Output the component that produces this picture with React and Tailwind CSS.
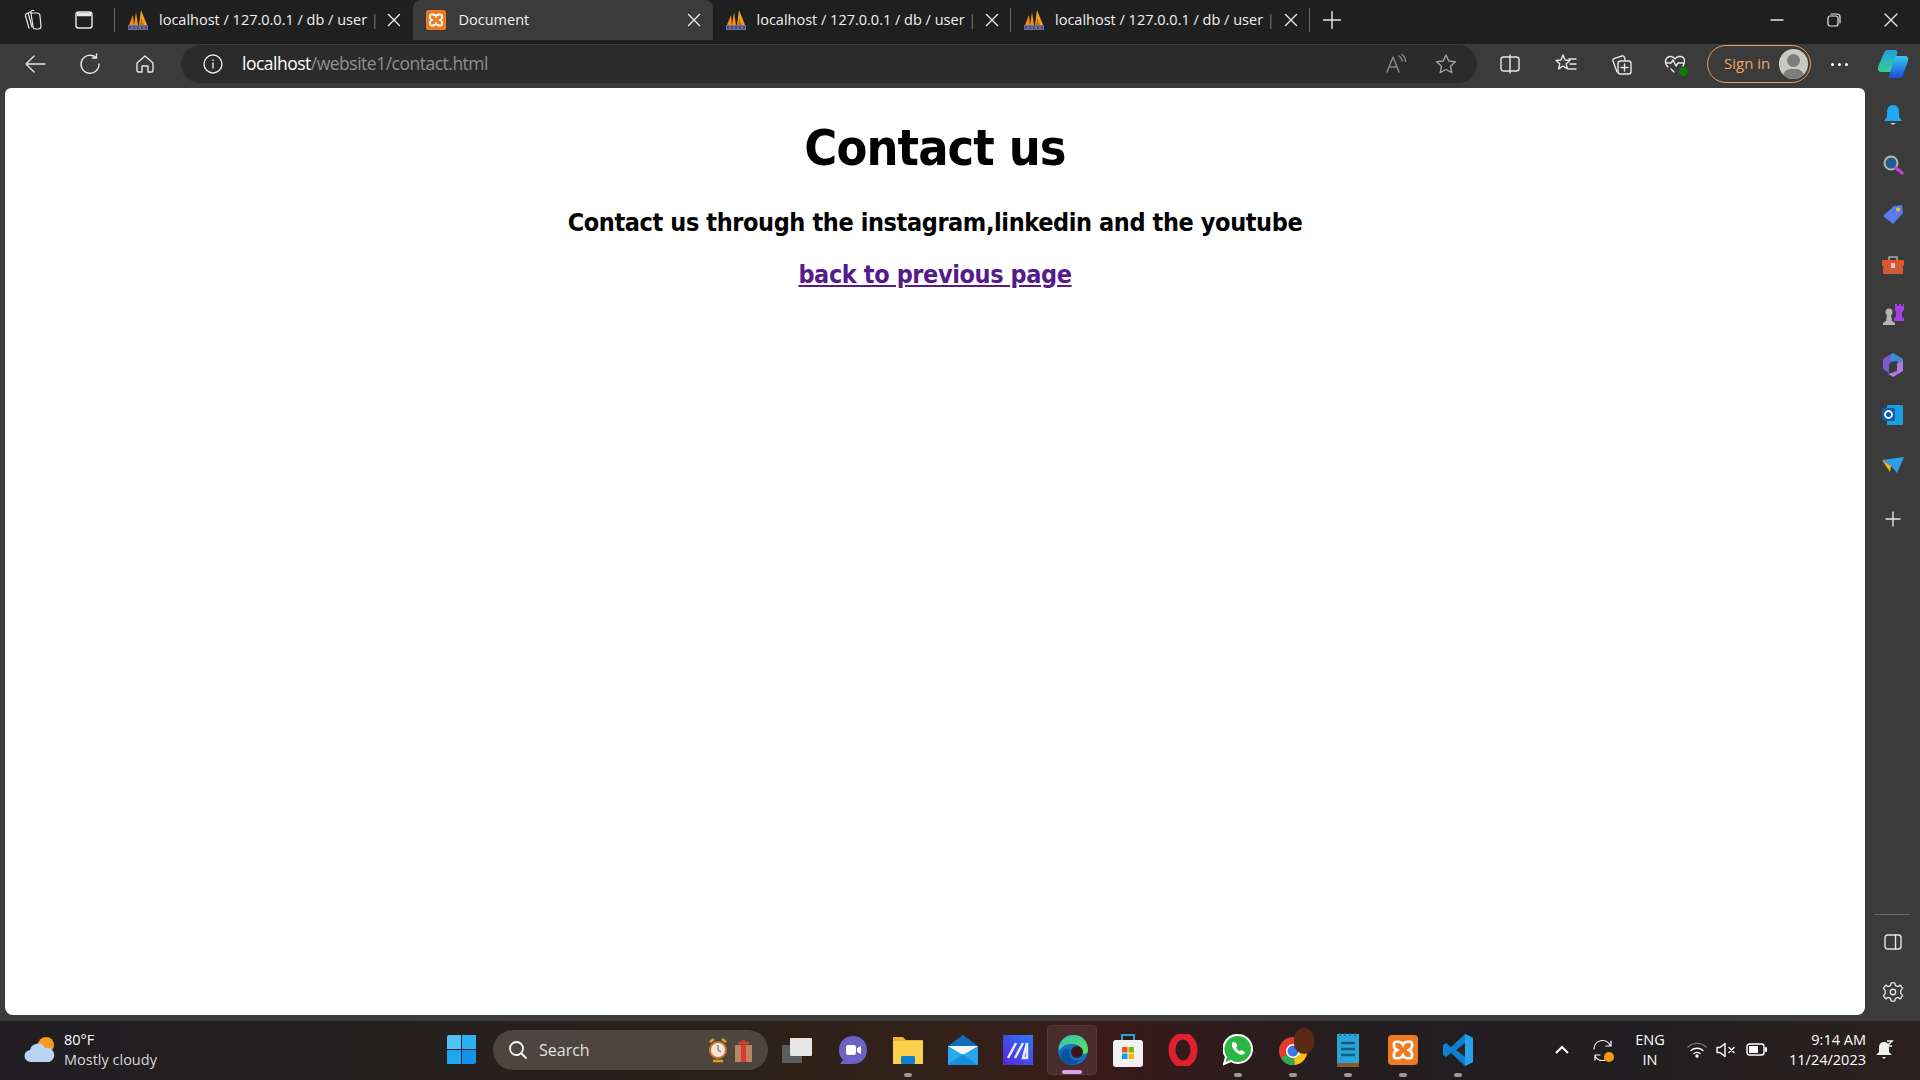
// App.jsx - browser window showing the contact page, with Edge chrome and Windows taskbar
const uiFont = { fontFamily: '"Open Sans", "Noto Sans", sans-serif' }

const stroke = { fill: 'none', stroke: 'currentColor', strokeWidth: 1.4, strokeLinecap: 'round', strokeLinejoin: 'round' }

function Pma() {
  return (
    <svg width="22" height="22" viewBox="0 0 22 22" className="shrink-0">
      <path d="M2 16 L6 6 L7 16Z" fill="#f29111" />
      <path d="M7 16 L9 3 L11 16Z" fill="#f29111" />
      <path d="M12 16 L14 1 L20 16Z" fill="#f7a21b" />
      <path d="M13 16 L14 8 L17 16Z" fill="#c66f0a" />
      <rect x="1" y="16" width="20" height="5" fill="#6a6f9c" />
      <path d="M3 17v3M7 17v3M11 17v3M15 17v3M19 17v3" stroke="#2a2d4d" strokeWidth="1" />
    </svg>
  )
}

function Xampp({ size = 20 }) {
  return (
    <svg width={size} height={size} viewBox="0 0 20 20" className="shrink-0">
      <rect width="20" height="20" rx="2.500" fill="#ee7a22" />
      <path d="M7 4.500H5.500Q4 4.500 4 6v1.500Q4 9 6 10q-2 1-2 2.500V14q0 1.500 1.500 1.500H7q2 0 3-2 1 2 3 2h1.500Q16 15.500 16 14v-1.500Q16 11 14 10q2-1 2-2.500V6q0-1.500-1.500-1.500H13q-2 0-3 2-1-2-3-2z" fill="none" stroke="#fff" strokeWidth="1.800" />
    </svg>
  )
}

function Tab({ icon, active, divider, width = 'w-[298.5px]' }) {
  return (
    <div className={`${width} h-10 flex items-center ${icon === 'pma' ? 'pl-3' : 'pl-[13px]'} pr-[11px] relative shrink-0 ${active ? 'bg-[#3b3b3b] rounded-t-lg' : ''}`}>
      {icon === 'pma' ? <Pma /> : <Xampp />}
      <div className={`${icon === 'pma' ? 'ml-[10px]' : 'ml-[13px]'} flex-1 text-[14.5px] text-[#f0f0f0] whitespace-nowrap`}>
        {icon === 'pma' ? <>localhost / 127.0.0.1 / db / user <span className="text-[#777]">|</span></> : 'Document'}
      </div>
      <svg width="16" height="16" viewBox="0 0 16 16" className="text-[#e8e8e8] shrink-0" {...stroke}>
        <path d="M2.500 2.500l11 11M13.500 2.500l-11 11" />
      </svg>
      {divider && <div className="absolute right-0 top-2 bottom-2 w-px bg-[#6a6a6a]" />}
    </div>
  )
}

function TabStrip() {
  return (
    <div className="h-11 bg-[#1f1f1f] flex text-[#e8e8e8] relative">
      <div className="w-[114px] h-10 flex items-center pl-[21px] shrink-0">
        <svg width="22" height="24" viewBox="0 0 22 24" {...stroke} strokeWidth="1.200">
          <path d="M10 5h6q3 0 3 3l1 10q0 3-2.500 3h-3q-2 0-2.500-2z" />
          <path d="M10 5q-1-2 1-2.500h2M11 19L7.500 6.500Q7 4.500 9 4M8 20L4.500 8Q4 6 6.500 5" />
        </svg>
        <svg width="20" height="20" viewBox="0 0 20 20" className="ml-[31px]" {...stroke}>
          <rect x="2" y="2" width="16" height="16" rx="2.500" />
          <path d="M3 4.500h14" strokeWidth="3.500" strokeLinecap="butt" />
        </svg>
      </div>
      <div className="w-px h-6 mt-2 bg-[#6a6a6a] shrink-0" />
      <Tab icon="pma" width="w-[297.5px]" />
      <Tab icon="doc" active width="w-[300px]" />
      <Tab icon="pma" divider />
      <Tab icon="pma" divider />
      <svg width="20" height="20" viewBox="0 0 20 20" className="ml-[12px] mt-[10px]" {...stroke}>
        <path d="M10 1.500v17M1.500 10h17" />
      </svg>
      <div className="flex-1" />
      <div className="flex h-10 items-center pr-[22px] gap-[43px]">
        <svg width="14" height="14" viewBox="0 0 14 14" {...stroke}><path d="M1 7h12" /></svg>
        <svg width="14" height="14" viewBox="0 0 14 14" {...stroke} strokeWidth="1.200">
          <rect x="1" y="3" width="10" height="10" rx="2" /><path d="M4 1h6a3 3 0 0 1 3 3v6" />
        </svg>
        <svg width="14" height="14" viewBox="0 0 14 14" {...stroke}><path d="M1 1l12 12M13 1L1 13" /></svg>
      </div>
    </div>
  )
}

function Toolbar() {
  return (
    <div className="h-11 bg-[#3b3b3b] flex items-start text-[#e6e6e6]">
      <div className="w-[181px] h-[38px] mt-[1px] flex items-center shrink-0 pl-6">
        <svg width="22" height="20" viewBox="0 0 22 20" {...stroke}><path d="M21 10H2M10 2l-8 8 8 8" /></svg>
        <svg width="22" height="22" viewBox="0 0 22 22" className="ml-[33px]" {...stroke}>
          <path d="M17 4.500A9 9 0 1 0 20 11M17.500 1v4h-4" />
        </svg>
        <svg width="20" height="20" viewBox="0 0 20 20" className="ml-[34px]" {...stroke}>
          <path d="M2 9l8-7 8 7v7.500a1.500 1.500 0 0 1-1.500 1.500H13v-6H7v6H3.500A1.500 1.500 0 0 1 2 16.500z" />
        </svg>
      </div>
      <div className="w-[1296px] h-[38px] mt-[1px] bg-[#2b2b2b] rounded-[19px] flex items-center shrink-0 pl-[22px] pr-[20px]">
        <svg width="20" height="20" viewBox="0 0 20 20" {...stroke}>
          <circle cx="10" cy="10" r="9" /><path d="M10 9v5M10 6v.4" />
        </svg>
        <div className="ml-[19px] text-[17.5px] text-white tracking-[-0.5px] pb-[1px]">
          localhost<span className="text-[#8f8f8f]">/website1/contact.html</span>
        </div>
        <div className="flex-1" />
        <svg width="22" height="22" viewBox="0 0 22 22" className="text-[#8a8a8a]" {...stroke}>
          <path d="M2 19L8 4l6 15M4.500 14h7M14 3a6 6 0 0 1 3 5M17 1.500a9 9 0 0 1 3.500 7" />
        </svg>
        <svg width="22" height="22" viewBox="0 0 22 22" className="ml-[28px] text-[#a0a0a0]" {...stroke}>
          <path d="M11 2l2.800 6 6.500.8-4.800 4.400 1.300 6.500L11 16.500l-5.800 3.200 1.300-6.500L1.700 8.800 8.200 8z" />
        </svg>
      </div>
      <div className="flex-1 h-[38px] mt-[1px] flex items-center pl-[23px]">
        <svg width="20" height="20" viewBox="0 0 20 20" className="shrink-0" {...stroke}>
          <rect x="1" y="3" width="18" height="14" rx="2.500" /><path d="M10 1v18" />
        </svg>
        <svg width="22" height="22" viewBox="0 0 22 22" className="ml-[35px] shrink-0" {...stroke}>
          <path d="M8 2l2 5 5 .5-3.800 3.300 1.200 5L8 13l-4.400 2.800 1.200-5L1 7.500 6 7zM14 6h7M15 11h6M13 16h8" />
        </svg>
        <svg width="22" height="22" viewBox="0 0 22 22" className="ml-[33px] shrink-0" {...stroke}>
          <path d="M7 19L3 8q-.5-2 1.500-2.600L12 3q2-.5 2.500 1.500L15 7" />
          <rect x="8" y="8" width="13" height="13" rx="2.500" /><path d="M14.500 11v7M11 14.500h7" />
        </svg>
        <div className="ml-[32px] relative shrink-0">
          <svg width="22" height="22" viewBox="0 0 22 22" {...stroke}>
            <path d="M4 14Q1 11 1.500 7.500 3 3 7 3.500 10 4 11 6 12 4 15 3.500 20 3 20.500 7.500 21 10 19 13M2 10h5l2-3 3 6 2-3h6M7 16l3 3" />
          </svg>
          <div className="absolute right-[-2px] bottom-[-1px] w-[9px] h-[9px] rounded-full bg-[#0f7b0f]" />
        </div>
        <div className="ml-[21px] w-[104px] h-[38px] border border-[#f0985a] rounded-[19px] flex items-center pl-4 pr-[2px] justify-between shrink-0">
          <span className="text-[15px] text-[#f0a468] pb-[1px]">Sign in</span>
          <div className="w-[29px] h-[30px] rounded-full bg-[#c8c8c4] relative overflow-hidden">
            <div className="absolute left-[8px] top-[5px] w-[13px] h-[13px] rounded-full bg-[#7d7d7b]" />
            <div className="absolute left-[4px] top-[20px] w-[21px] h-[16px] rounded-full bg-[#7d7d7b]" />
          </div>
        </div>
        <div className="ml-[20px] flex gap-[4px] shrink-0">
          <i className="w-[3px] h-[3px] rounded-full bg-white" />
          <i className="w-[3px] h-[3px] rounded-full bg-white" />
          <i className="w-[3px] h-[3px] rounded-full bg-white" />
        </div>
        <svg width="32" height="30" viewBox="0 0 32 30" className="ml-[29px] shrink-0">
          <defs>
            <linearGradient id="cpA" x1="0" y1="0" x2="0" y2="1"><stop offset="0" stopColor="#1ea0e6" /><stop offset="1" stopColor="#38d08c" /></linearGradient>
            <linearGradient id="cpB" x1="0" y1="0" x2="0" y2="1"><stop offset="0" stopColor="#37c6f4" /><stop offset="1" stopColor="#1a4fd8" /></linearGradient>
          </defs>
          <path d="M11 1h7q2 0 2.500 2L15 23H5Q0 23 1 18L7 4q1-3 4-3z" fill="url(#cpA)" />
          <path d="M20 7h8q4 0 3 5l-5 14q-1 3-4 3h-9q-2 0-1-2l6-19q.5-1 2-1z" fill="url(#cpB)" />
        </svg>
      </div>
    </div>
  )
}

// side panel app icons, top to bottom
const sideIcons = [
  <svg key="bell" width="20" height="22" viewBox="0 0 20 22"><path d="M10 1c4 0 6 3 6 7v5l3 4H1l3-4V8c0-4 2-7 6-7z" fill="#1ea7f2" /><path d="M7 19h6l-3 2z" fill="#ccc" /></svg>,
  <svg key="search" width="22" height="22" viewBox="0 0 22 22"><circle cx="9" cy="9" r="6.500" fill="#1b5f8f" stroke="#b5b5b5" strokeWidth="2" /><path d="M14 14l6 5" stroke="#c73fd8" strokeWidth="3.500" strokeLinecap="round" /></svg>,
  <svg key="tag" width="22" height="22" viewBox="0 0 22 22"><path d="M1 12L12 2l8-1 1 8-10 11z" fill="#5a7bf0" /><circle cx="16" cy="5.500" r="2" fill="#f2c21a" /></svg>,
  <svg key="tool" width="24" height="20" viewBox="0 0 24 20"><path d="M8 5V2h8v3" fill="none" stroke="#aaa" strokeWidth="1.500" /><rect x="1" y="5" width="22" height="6" rx="1" fill="#e4552d" /><rect x="2" y="11" width="20" height="8" rx="1" fill="#cf5a35" /><rect x="10" y="8" width="4" height="5" fill="#ccc" /></svg>,
  <svg key="chess" width="24" height="24" viewBox="0 0 24 24"><circle cx="8" cy="9" r="3.500" fill="#b5b5b5" /><path d="M6 12h4l1 6 3 2v2H2v-2l3-2z" fill="#b5b5b5" /><path d="M14 1h2v2h2V1h2v2h2V1h1v6l-2 2v5l2 1v3H13v-3l2-1V9l-1-2z" fill="#a63fe8" /></svg>,
  <svg key="m365" width="22" height="24" viewBox="0 0 22 24"><path d="M11 0l10 6v5l-7-3-5 1V1z" fill="#3a8cd8" /><path d="M1 6l8-5v8l-2 3v8l-6-4z" fill="#7a5ad0" /><path d="M21 8v10l-10 6-5-3 9-3V10z" fill="#b07ae0" /></svg>,
  <svg key="outlook" width="22" height="20" viewBox="0 0 22 20"><rect x="5" y="0" width="16" height="20" rx="1" fill="#1a9fe0" /><rect x="0" y="3" width="13" height="13" rx="1" fill="#0a5fb0" /><circle cx="6.500" cy="9.500" r="3.500" fill="none" stroke="#fff" strokeWidth="1.800" /></svg>,
  <svg key="send" width="22" height="16" viewBox="0 0 22 16"><path d="M0 3L22 0 15 16 9 9z" fill="#2f9ee8" /><path d="M0 3l9 6-1 6z" fill="#f2b01e" /></svg>,
]

function SidePanel() {
  return (
    <div className="w-[55px] shrink-0 flex flex-col items-center text-[#e6e6e6] pt-[2px]">
      {sideIcons.map((icon, i) => (
        <div key={i} className="h-[50px] w-full flex items-center justify-center">{icon}</div>
      ))}
      <svg width="16" height="16" viewBox="0 0 16 16" className="mt-[21px]" {...stroke}><path d="M8 1v14M1 8h14" /></svg>
      <div className="flex-1" />
      <div className="w-[35px] h-px bg-[#6a6a6a]" />
      <svg width="18" height="16" viewBox="0 0 18 16" className="mt-[19px]" {...stroke}>
        <rect x="1" y="1" width="16" height="14" rx="2.500" /><path d="M11.500 1v14" />
      </svg>
      <svg width="22" height="22" viewBox="0 0 24 24" className="mt-[31px] mb-[12px]" {...stroke}>
        <circle cx="12" cy="12" r="3" />
        <path d="M10 2h4l.7 3 2.600 1.100L20 4.500l2.500 3.500-2 2.200v3.600l2 2.200-2.500 3.500-2.700-1.600-2.600 1.100-.7 3h-4l-.7-3-2.600-1.100L4 19.500 1.500 16l2-2.200v-3.600l-2-2.200L4 4.500l2.700 1.600L9.300 5z" />
      </svg>
    </div>
  )
}

function ContactPage() {
  return (
    <main className="flex-1 bg-white rounded-b-lg rounded-t-md text-center text-black font-bold" style={{ fontFamily: '"DejaVu Sans", sans-serif', fontStretch: 'condensed' }}>
      <h1 className="text-[50px] leading-[60px] mt-[30px] tracking-[-0.9px]">Contact us</h1>
      <p className="text-[25px] leading-[32px] mt-[29px] tracking-[-0.4px]">Contact us through the instagram,linkedin and the youtube</p>
      <a href="#" className="inline-block text-[25px] leading-[32px] mt-[20px] text-[#551a8b] underline tracking-[-0.4px]">back to previous page</a>
    </main>
  )
}

// taskbar app icons, each in a 55px slot
const taskApps = [
  { el: <svg width="32" height="30" viewBox="0 0 32 30"><rect x="0" y="10" width="20" height="18" rx="1" fill="#5d5d5d" /><rect x="8" y="3" width="22" height="18" rx="1" fill="#e6e6e6" /></svg> },
  { el: <svg width="30" height="30" viewBox="0 0 30 30"><path d="M15 1c8 0 14 6 14 14s-6 14-14 14H2l3-4C2 22 1 19 1 15 1 7 7 1 15 1z" fill="#6a62c4" /><rect x="8" y="10" width="10" height="10" rx="2" fill="#fff" /><path d="M19 13l4-2v8l-4-2z" fill="#fff" /></svg> },
  { dot: true, el: <svg width="32" height="32" viewBox="0 0 32 32"><path d="M1 3h10l3 3h17v24H1z" fill="#f0b429" /><rect x="1" y="7" width="30" height="23" fill="#fbd14b" /><rect x="9" y="22" width="14" height="8" rx="1" fill="#0f7fcf" /></svg> },
  { el: <svg width="30" height="30" viewBox="0 0 30 30"><path d="M0 11L15 0l15 11v19H0z" fill="#0f6cbd" /><path d="M0 11h30v19H0z" fill="#28a8ea" /><path d="M0 11h30L15 20z" fill="#f4f4f4" /><path d="M0 30l15-11 15 11z" fill="#1490df" /></svg> },
  { el: <svg width="30" height="30" viewBox="0 0 30 30"><defs><linearGradient id="mv" x1="1" y1="0" x2="0" y2="1"><stop offset="0" stopColor="#2a7bf0" /><stop offset="1" stopColor="#5a22e0" /></linearGradient></defs><rect width="30" height="30" fill="url(#mv)" /><path d="M5 23l8-15M12 23l8-15M20 23l4-15v15z" stroke="#e8e8ff" strokeWidth="2.500" fill="none" /></svg> },
  { active: true, el: <svg width="30" height="32" viewBox="0 0 30 32"><defs><linearGradient id="eg" x1="0" y1="0" x2="1" y2="1"><stop offset="0" stopColor="#36c2b0" /><stop offset="1" stopColor="#5fe05a" /></linearGradient></defs><circle cx="15" cy="16" r="15" fill="#1172c4" /><path d="M1 13C3 4 10 1 16 1c8 0 14 6 14 15 0 4-4 5-8 4 3-4 0-10-7-10C9 10 4 11 1 17z" fill="url(#eg)" /><path d="M12 16c-3 7 4 12 10 10-3 3-6 5-10 5-6 0-10-6-9-12 2-3 6-5 9-3z" fill="#0c4f9c" /><circle cx="19" cy="18" r="6" fill="#3d1418" /></svg> },
  { el: <svg width="30" height="34" viewBox="0 0 30 34"><path d="M9 8V2h12v6" fill="none" stroke="#1ea7d8" strokeWidth="2" /><rect y="7" width="30" height="27" rx="3" fill="#f2f2f2" /><rect x="9" y="14" width="5.500" height="5.500" fill="#f25022" /><rect x="15.500" y="14" width="5.500" height="5.500" fill="#7fba00" /><rect x="9" y="20.500" width="5.500" height="5.500" fill="#00a4ef" /><rect x="15.500" y="20.500" width="5.500" height="5.500" fill="#ffb900" /></svg> },
  { el: <svg width="30" height="32" viewBox="0 0 30 32"><ellipse cx="15" cy="16" rx="11" ry="14" fill="none" stroke="#e0202e" strokeWidth="7" /></svg> },
  { dot: true, el: <svg width="30" height="32" viewBox="0 0 30 32"><path d="M15 1a14 14 0 0 1 0 28q-4 0-7-2l-7 3 2-7a14 14 0 0 1 12-22z" fill="#2db742" stroke="#fff" strokeWidth="2" /><path d="M10 8c-2 2-1 6 2 9s7 5 9 3l1-2-4-2-1 1.500c-2-1-3-2-4-4l1.500-1L13 8.500z" fill="#fff" /></svg> },
  { dot: true, el: <div className="relative"><svg width="30" height="32" viewBox="0 0 30 32"><circle cx="15" cy="17" r="14" fill="#e33b2e" /><path d="M15 17L3 24a14 14 0 0 0 14 7z" fill="#35a853" /><path d="M15 17l2 14a14 14 0 0 0 12-16z" fill="#fbc013" /><circle cx="15" cy="17" r="7" fill="#fff" /><circle cx="15" cy="17" r="5.500" fill="#3b78e7" /></svg><div className="absolute right-[-6px] top-[-6px] w-[20px] h-[26px] rounded-full bg-[#5a2a14]" /></div> },
  { dot: true, el: <svg width="22" height="34" viewBox="0 0 22 34"><rect y="1" width="22" height="29" fill="#2aa5d8" /><rect y="30" width="22" height="4" fill="#8a5a2a" /><path d="M4 10h14M4 16h14M4 22h14" stroke="#0f5f85" strokeWidth="2.500" /><path d="M3 0v3M8 0v3M13 0v3M18 0v3" stroke="#1a6f95" strokeWidth="1.500" /></svg> },
  { dot: true, el: <Xampp size={30} /> },
  { dot: true, el: <svg width="30" height="34" viewBox="0 0 30 34"><path d="M22 1l8 4v24l-8 4L8 20l-5 4-3-2v-10l3-2 5 4z" fill="#0f7fcf" /><path d="M22 1l8 4v24l-8 4z" fill="#22a3ec" /><path d="M22 10v14l-9-7z" fill="#2b2326" /></svg> },
]

function Taskbar() {
  return (
    <footer className="h-[59px] pb-[2px] flex items-center text-white bg-[linear-gradient(90deg,#201e22_0%,#241f1f_20%,#2c2118_40%,#34201a_52%,#3a1a18_57%,#241d20_70%,#201e20_85%,#2c2020_100%)]">
      <div className="w-[447px] shrink-0 flex items-center pl-6">
        <svg width="33" height="30" viewBox="0 0 33 30">
          <circle cx="22" cy="10" r="8" fill="#f59b23" />
          <path d="M7 27a6 6 0 0 1-1-12 8 8 0 0 1 15-2 7 7 0 0 1 4 14z" fill="#b9d3f5" />
        </svg>
        <div className="ml-[7px] text-[14.5px] leading-[20px]">
          <div>80°F</div>
          <div className="text-[#d8d8d8]">Mostly cloudy</div>
        </div>
      </div>
      <div className="w-[29px] h-[29px] grid grid-cols-2 gap-[1px] shrink-0">
        <i className="bg-[#4fc3f7] rounded-tl-[2px]" /><i className="bg-[#2ab2f5]" />
        <i className="bg-[#1fa5f2]" /><i className="bg-[#1493ea] rounded-br-[2px]" />
      </div>
      <div className="w-[275px] h-10 ml-[17px] bg-[#4e453e] rounded-[20px] flex items-center pl-[15px] pr-[12px] shrink-0">
        <svg width="20" height="20" viewBox="0 0 20 20" {...stroke} strokeWidth="1.800">
          <circle cx="8.500" cy="8.500" r="6.500" /><path d="M13.500 13.500L18 18" />
        </svg>
        <span className="ml-[11px] text-[16px] text-[#e0e0e0]">Search</span>
        <div className="flex-1" />
        <svg width="46" height="26" viewBox="0 0 46 26" className="mr-[2px]">
          <circle cx="10" cy="13" r="8" fill="#f3e3d8" stroke="#c9752e" strokeWidth="2" />
          <path d="M10 8v5l3 2" stroke="#555" fill="none" />
          <path d="M2 5l4-3M18 5l-4-3" stroke="#e0a020" strokeWidth="2.500" />
          <path d="M5 24h10" stroke="#e0a020" strokeWidth="2.500" />
          <rect x="27" y="8" width="17" height="17" fill="#b88560" />
          <rect x="33" y="8" width="5" height="17" fill="#d83a2e" />
          <path d="M30 6h11M35.500 3v5" stroke="#d83a2e" strokeWidth="2.500" />
        </svg>
      </div>
      <div className="ml-[2px] flex shrink-0">
        {taskApps.map((app, i) => (
          <div key={i} className="w-[55px] h-[50px] flex items-center justify-center relative shrink-0">
            {app.active && <div className="absolute inset-y-0 left-[2px] right-[3px] bg-[#4a2c2c] rounded border border-[#5a3a3a]" />}
            <div className="relative">{app.el}</div>
            {app.dot && <div className="absolute bottom-[-2px] left-[24px] w-[8px] h-[4px] rounded-sm bg-[#9a9a9a]" />}
            {app.active && <div className="absolute bottom-[1px] left-[17px] w-[20px] h-[4px] rounded-sm bg-[#d8a4e6]" />}
          </div>
        ))}
      </div>
      <div className="flex-1" />
      <div className="flex items-center pr-[26px] shrink-0">
        <svg width="14" height="10" viewBox="0 0 14 10" fill="none" stroke="currentColor" strokeWidth="2"><path d="M1 8l6-6 6 6" /></svg>
        <div className="relative ml-[24px]">
          <svg width="20" height="22" viewBox="0 0 20 22" {...stroke} strokeWidth="1.200">
            <path d="M1 10A8.500 8.500 0 0 1 17 6M18 2v5h-5M18 14a8.500 8.500 0 0 1-16 3M2 21v-5h5" />
          </svg>
          <div className="absolute right-[-1px] bottom-[-1px] w-[10px] h-[10px] rounded-full bg-[#f59b0b]" />
        </div>
        <div className="ml-[19px] w-[36px] text-center text-[14.5px] leading-[20px]">ENG<br />IN</div>
        <svg width="20" height="16" viewBox="0 0 20 16" className="ml-[19px]" {...stroke}>
          <path d="M1 5a13 13 0 0 1 18 0" stroke="#777" />
          <path d="M4 8.500a9 9 0 0 1 12 0M7 11.500a5 5 0 0 1 6 0" />
          <circle cx="10" cy="14" r="1" fill="currentColor" />
        </svg>
        <svg width="20" height="16" viewBox="0 0 20 16" className="ml-[9px]" {...stroke}>
          <path d="M1 5.500h3l5-4v13l-5-4H1zM13 5.500l5 5M18 5.500l-5 5" />
        </svg>
        <svg width="21" height="13" viewBox="0 0 21 13" className="ml-[10px]" {...stroke}>
          <rect x="1" y="1" width="17" height="11" rx="2.500" /><rect x="3" y="3" width="9" height="7" fill="currentColor" stroke="none" /><path d="M20 5v3" strokeWidth="2" />
        </svg>
        <div className="ml-[22px] text-right text-[14.5px] leading-[20px]">9:14 AM<br />11/24/2023</div>
        <svg width="18" height="20" viewBox="0 0 18 20" className="ml-[10px]">
          <path d="M8 2c3 0 5 2 5 6v4l3 3H0l3-3V8c0-4 2-6 5-6z" fill="#f0f0f0" />
          <path d="M6 17h4l-2 2z" fill="#f0f0f0" />
          <path d="M11 1h5l-5 5h5" stroke="#f0f0f0" strokeWidth="1.500" fill="none" />
        </svg>
      </div>
    </footer>
  )
}

export default function App() {
  return (
    <div className="w-[1920px] h-[1080px] flex flex-col overflow-hidden bg-[#3b3b3b]" style={uiFont}>
      <TabStrip />
      <Toolbar />
      <div className="flex-1 flex min-h-0 pl-[5px] pb-[6px]">
        <ContactPage />
        <SidePanel />
      </div>
      <Taskbar />
    </div>
  )
}
